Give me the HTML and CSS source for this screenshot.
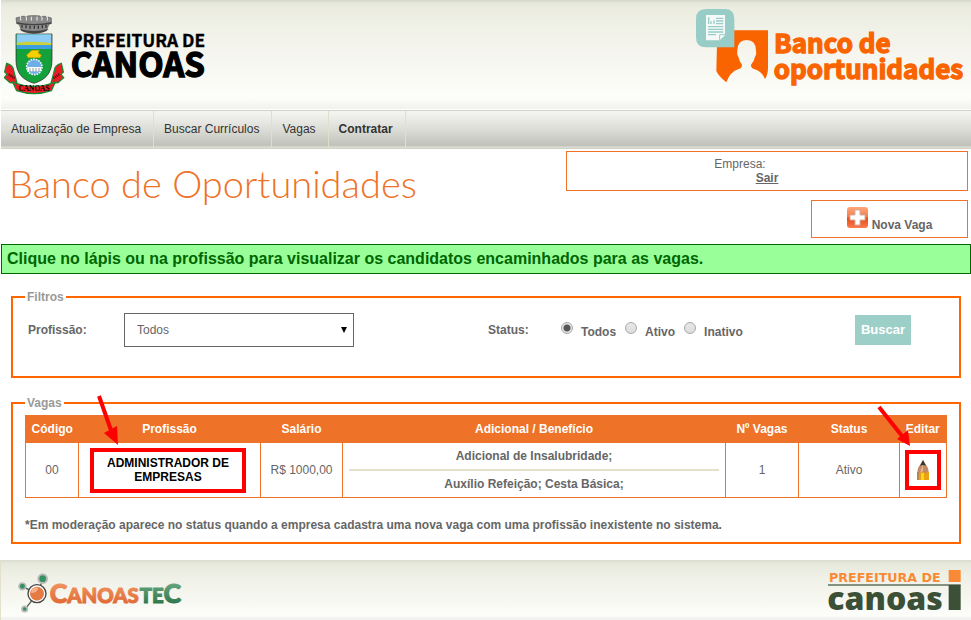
FILE: index.html
```html
<!DOCTYPE html>
<html lang="pt-BR">
<head>
<meta charset="utf-8">
<title>Banco de Oportunidades</title>
<link rel="stylesheet" href="styles.css">
</head>
<body>
<header class="header">
  <svg class="logo-city" viewBox="0 0 630 246" role="img" aria-label="Prefeitura de Canoas">
    <g transform="translate(-12 -45)">
      <path d="M48 54l10-3 5 3 2-5 9 0 5 4 3-5 12-1h14l12 1 3 5 5-4 9 0 2 5 5-3 10 3v16l-8 4-5 14q-39 16-78 0l-5-14-8-4z" fill="#8a8a8a" stroke="#555" stroke-width="2"/>
      <path d="M50 69q52 10 104 0" stroke="#444" stroke-width="4" fill="none"/>
      <path d="M62 51v11m17-11v11m15-12v12m17-12v12m15-11v11m16-11v11" stroke="#eee" stroke-width="3"/>
      <path d="M66 74v9m12-7v9m12-8v9m13-9v9m12-9v9m12-10v9m11-11v9" stroke="#333" stroke-width="4"/>
      <path d="M58 87q44 12 88 0-10 13-44 14-34-1-44-14z" fill="#444"/>
      <path d="M48 102h108v78c0 42-22 60-54 70-32-10-54-28-54-70z" fill="#14a03a" stroke="#222" stroke-width="2"/>
      <path d="M50 103h104v30H50z" fill="#8dcdf5"/>
      <path d="M50 128l32-3 38 1 34 3v6H50z" fill="#c9d23a"/>
      <path d="M50 135h104v12H50z" fill="#3e9fe0"/>
      <path d="M80 165l16-14h22l-4 8 10 6-4 8H84z" fill="#f5d000" stroke="#c49b00" stroke-width="2"/>
      <circle cx="103" cy="201" r="23" fill="#6daee8" stroke="#e8f4ff" stroke-width="5" stroke-dasharray="5 3"/>
      <path d="M83 201h40v13H83z" fill="#fff"/>
      <path d="M90 204v12m9-12v12m9-12v12m9-12v12" stroke="#8c9aa5" stroke-width="3"/>
      <path d="M20 190q20 6 21 22l10 38-21-2-17-15 8-10-7-7z" fill="#ed1c24" stroke="#168b36" stroke-width="4"/>
      <path d="M184 190q-20 6-21 22l-10 38 21-2 17-15-8-10 7-7z" fill="#ed1c24" stroke="#168b36" stroke-width="4"/>
      <path d="M26 223l18 12m134-12l-18 12" stroke="#611" stroke-width="7" stroke-dasharray="4 2"/>
      <path d="M38 246q64 26 128 0l-12 26q-52 18-104 0z" fill="#ed1c24" stroke="#168b36" stroke-width="4"/>
      <text x="102" y="273" class="crest-text">CANOAS</text>
    </g>
    <text x="201" y="97" class="city-small">PREFEITURA DE</text>
    <text x="200" y="186" class="city-big">CANOAS</text>
  </svg>
  <svg class="logo-bank" viewBox="0 0 804 240" role="img" aria-label="Banco de oportunidades">
    <g transform="translate(-48 -24)">
      <path d="M112 91h152v112q0 20-9 34-8-22-33-30-10-3-9-13 9-9 12-24 5-5 3-18 0-32-28-32-28 0-28 32-2 13 3 18 3 15 11 24 0 10-10 13-26 8-37 40-23-18-30-34z" fill="#fa6400"/>
      <path d="M78 27h56q29 0 29 29v86H78q-30 0-30-30V57q0-30 30-30z" fill="#98cdc7"/>
      <path d="M78 45h57v61l-16 15H78z" fill="#f5faf8"/>
      <path d="M86 52v20m7-8v8m9-11v11m6-17h22m-22 8h22m-22 8h22M84 80h46M84 88h46M84 96h46M84 104h24" stroke="#98cdc7" stroke-width="4"/>
      <path d="M119 121v-17h17" fill="none" stroke="#98cdc7" stroke-width="3"/>
    </g>
    <text x="234" y="136" class="bank-text">Banco de</text>
    <text x="233" y="212" class="bank-text">oportunidades</text>
  </svg>
</header>

<nav class="nav">
  <a href="#">Atualização de Empresa</a>
  <a href="#">Buscar Currículos</a>
  <a href="#">Vagas</a>
  <a href="#" class="current">Contratar</a>
</nav>

<main>
  <div class="top">
    <h1>Banco de Oportunidades</h1>
    <div class="side">
      <div class="company">
        <span>Empresa:</span>
        <a href="#">Sair</a>
      </div>
      <a href="#" class="new-job">
        <svg viewBox="0 0 21 21" width="21" height="21" aria-hidden="true">
          <defs><linearGradient id="plus" x1="0" y1="0" x2="0" y2="1"><stop offset="0" stop-color="#ffa87c"/><stop offset=".48" stop-color="#f57a45"/><stop offset=".52" stop-color="#e8490f"/><stop offset="1" stop-color="#fb7b50"/></linearGradient></defs>
          <rect width="21" height="21" rx="3" fill="url(#plus)"/>
          <path d="M8 3h5v5h5v5h-5v5H8v-5H3V8h5z" fill="#fff" stroke="#c9b3a8"/>
        </svg>
        <span>Nova Vaga</span>
      </a>
    </div>
  </div>

  <p class="notice">Clique no lápis ou na profissão para visualizar os candidatos encaminhados para as vagas.</p>

  <form>
    <fieldset>
      <legend>Filtros</legend>
      <div class="filters">
        <label class="name" for="job">Profissão:</label>
        <span class="select"><select id="job"><option>Todos</option></select></span>
        <span class="name status" id="status">Status:</span>
        <div class="radios" role="radiogroup" aria-labelledby="status">
          <label><input type="radio" name="status" checked><span>Todos</span></label>
          <label><input type="radio" name="status"><span>Ativo</span></label>
          <label><input type="radio" name="status"><span>Inativo</span></label>
        </div>
        <button type="submit">Buscar</button>
      </div>
    </fieldset>
  </form>

  <fieldset class="jobs">
    <legend>Vagas</legend>
    <table>
      <colgroup><col class="c-code"><col class="c-job"><col class="c-pay"><col><col class="c-count"><col class="c-status"><col class="c-edit"></colgroup>
      <thead>
        <tr><th>Código</th><th>Profissão</th><th>Salário</th><th>Adicional / Benefício</th><th>Nº Vagas</th><th>Status</th><th>Editar</th></tr>
      </thead>
      <tbody>
        <tr>
          <td>00</td>
          <td class="marked">
            <a href="#" class="job-link">ADMINISTRADOR DE EMPRESAS</a>
            <svg class="arrow arrow-job" viewBox="0 0 24 52" aria-hidden="true"><path d="M3 2L16 39" stroke="#f00" stroke-width="4"/><path d="M22 51L8 39l13-7z" fill="#f00"/></svg>
          </td>
          <td>R$ 1000,00</td>
          <td class="benefits"><div>Adicional de Insalubridade;</div><div>Auxílio Refeição; Cesta Básica;</div></td>
          <td>1</td>
          <td>Ativo</td>
          <td class="marked">
            <a href="#" class="edit-link" aria-label="Editar">
              <svg viewBox="0 0 12 20" width="12" height="20" aria-hidden="true">
                <path d="M6 0L1 8 0 14v6h12v-6l-1-6z" fill="#c38a66"/>
                <path d="M6 4L3 13l3-2z" fill="#e2b99b"/>
                <path d="M6 0L3 6q3-2 6 0z" fill="#333"/>
                <path d="M0 12q2-1 3 2 3-5 6 0 1-3 3-2v8H0z" fill="#e9a210"/>
                <path d="M4 13h3v7H4z" fill="#ffd21f"/>
                <path d="M0 12h2v8H0z" fill="#b98548"/>
              </svg>
            </a>
            <svg class="arrow arrow-edit" viewBox="0 0 34 42" aria-hidden="true"><path d="M2 2L25 31" stroke="#f00" stroke-width="4"/><path d="M33 41L20 34l11-9z" fill="#f00"/></svg>
          </td>
        </tr>
      </tbody>
    </table>
    <p class="note">*Em moderação aparece no status quando a empresa cadastra uma nova vaga com uma profissão inexistente no sistema.</p>
  </fieldset>
</main>

<footer class="footer">
  <svg class="logo-tec" viewBox="0 0 492 120" role="img" aria-label="CanoasTec">
    <defs>
      <linearGradient id="orange" x1="0" y1="0" x2="0" y2="1"><stop offset="0" stop-color="#f6a06c"/><stop offset="1" stop-color="#dc5f2b"/></linearGradient>
      <linearGradient id="green" x1="0" y1="0" x2="0" y2="1"><stop offset="0" stop-color="#79b28b"/><stop offset="1" stop-color="#206b40"/></linearGradient>
    </defs>
    <path d="M58 62L74 20M58 62L12 40M58 62L20 110" stroke="#555" stroke-width="4"/>
    <circle cx="74" cy="17" r="13" fill="#379263" stroke="#bbb" stroke-width="6"/>
    <circle cx="13" cy="40" r="10" fill="#379263" stroke="#bbb" stroke-width="5"/>
    <circle cx="20" cy="108" r="8" fill="#379263" stroke="#bbb" stroke-width="5"/>
    <circle cx="57" cy="62" r="27" fill="#fff" stroke="#444" stroke-width="4"/>
    <circle cx="57" cy="62" r="21" fill="#e67a43"/>
    <path d="M39 60q0-18 22-16-3 16-22 16z" fill="#f6b18c"/>
    <text x="95" y="90" class="tec-text" fill="url(#orange)" stroke="url(#orange)"><tspan class="tec-big">C</tspan>ANOAS</text>
    <text x="365" y="90" class="tec-text" fill="url(#green)" stroke="url(#green)">TE<tspan class="tec-big">C</tspan></text>
  </svg>
  <svg class="logo-foot" viewBox="0 0 402 126" role="img" aria-label="Prefeitura de Canoas">
    <text x="3" y="35" class="foot-small">PREFEITURA DE</text>
    <path d="M0 42h398v6H0z" fill="#829180"/>
    <text x="-2" y="119" class="foot-big">canoas</text>
    <path d="M362 0h36v36h-36z" fill="#f98a35"/>
    <path d="M362 45h36v75h-36z" fill="#3b5037"/>
  </svg>
</footer>
</body>
</html>
```
FILE: styles.css
```css
* { box-sizing: border-box; }
body {
  margin: 0;
  padding-left: 1px;
  background: #fff;
  color: #666;
  font: 12px/14px "Liberation Sans", Arial, sans-serif;
}
a { color: inherit; }
text { font-family: "Noto Sans CJK SC", "Liberation Sans", sans-serif; font-weight: bold; }

.header {
  display: flex;
  justify-content: space-between;
  align-items: flex-start;
  height: 110px;
  padding: 8px 7px 0 3px;
  border-bottom: 1px solid #fff;
  background: linear-gradient(#d5d7ca 0, #e5e7da 3px, #ecede0 8px, #f5f5ee 50px, #fdfdfa 98px, #f1f2ed 109px);
}
.logo-city { width: 210px; height: 82px; margin-top: 7px; }
.logo-bank { width: 268px; height: 80px; }
.crest-text { font-family: "Liberation Serif", serif; font-size: 22px; text-anchor: middle; }
.city-small { font-size: 52px; stroke: #000; stroke-width: 1px; }
.city-big { font-size: 99px; stroke: #000; stroke-width: 4px; }
.bank-text { font-size: 78px; fill: #fa6400; stroke: #fa6400; stroke-width: 4px; }

.nav {
  display: flex;
  height: 39px;
  border-top: 1px solid #d0d1c9;
  border-bottom: 1px solid #d0d1c7;
  background: linear-gradient(#f5f5f2 0, #dcddd7 50%, #c1c2ba 34px, #c5c6be 35px, #dcddd2 36px);
}
.nav a {
  padding: 11px 12px 11px 10px;
  border-right: 1px solid #e0e0c8;
  color: #333;
  text-decoration: none;
}
.nav .current { font-weight: bold; }

.top { display: flex; justify-content: space-between; height: 95px; padding: 2px 3px 0 8px; }
h1 {
  margin: 9px 0 0;
  color: #ee7228;
  font: 300 38px/46px Lato, sans-serif;
}
.side { display: flex; flex-direction: column; align-items: flex-end; gap: 9px; width: 402px; }
.company {
  display: flex;
  flex-direction: column;
  align-items: center;
  width: 100%;
  height: 40px;
  padding: 5px 0;
  border: 1px solid #ee7228;
}
.company span { margin-right: 54px; }
.company a { font-weight: bold; }
.new-job {
  display: flex;
  justify-content: center;
  gap: 4px;
  width: 157px;
  height: 38px;
  padding-top: 6px;
  border: 1px solid #ee7228;
  font-weight: bold;
  text-decoration: none;
}
.new-job span { padding-top: 11px; }

.notice {
  margin: 0;
  padding: 4px 5px;
  border: 1px solid #060;
  background: #9f9;
  color: #060;
  font: bold 16px/20px "Liberation Sans", Arial, sans-serif;
}

fieldset {
  min-width: 0;
  margin: 16px 10px 0;
  padding: 9px 12px 29px;
  border: 2px solid #f60;
}
legend { padding: 0 2px; color: #999; font-weight: bold; }
.filters { display: flex; align-items: center; height: 34px; padding-left: 3px; }
.name { width: 96px; font-weight: bold; }
.select { position: relative; width: 230px; }
.select::after {
  content: "";
  position: absolute;
  top: 14px;
  right: 7px;
  border: 3px solid transparent;
  border-top: 6px solid #000;
  border-bottom: 0;
  pointer-events: none;
}
select {
  appearance: none;
  width: 100%;
  height: 34px;
  padding: 0 12px;
  border: 1px solid #666;
  border-radius: 0;
  background: #fff;
  color: #666;
  font: inherit;
}
.status { width: 73px; margin-left: 134px; }
.radios { display: flex; gap: 9px; font-weight: bold; }
.radios label { display: flex; gap: 8px; }
.radios span { padding-top: 3px; }
input {
  appearance: none;
  width: 12px;
  height: 12px;
  margin: 0;
  border: 1px solid #a8a8a8;
  border-radius: 50%;
  background: linear-gradient(#e8e8e8, #dcdcdc);
}
input:checked { background: radial-gradient(circle, #555 0 3px, #e4e4e4 4px); }
button {
  height: 30px;
  margin-left: auto;
  margin-right: 36px;
  padding: 0 6px;
  border: 0;
  background: #9dcfc9;
  color: #fff;
  font: bold 13px/28px "Liberation Sans", Arial, sans-serif;
}

.jobs { margin-top: 18px; padding: 5px 12px 10px; }
table { width: 100%; table-layout: fixed; border-collapse: collapse; }
.c-code { width: 53px; }
.c-job { width: 182px; }
.c-pay { width: 82px; }
.c-count { width: 73px; }
.c-status { width: 101px; }
.c-edit { width: 47px; }
th { height: 27px; padding: 0; background: #ee7228; color: #fff; white-space: nowrap; }
thead tr { border: 1px solid #ee7228; }
td { height: 55px; padding: 0; border: 1px solid #ee7228; text-align: center; }
.marked { position: relative; }
.job-link {
  display: block;
  margin: 0 14px 0 11px;
  padding: 4px 12px 5px;
  border: 4px solid #f00;
  color: #000;
  font-weight: bold;
  text-decoration: none;
}
.edit-link {
  display: flex;
  justify-content: center;
  align-items: center;
  width: 36px;
  height: 40px;
  margin: 0 auto;
  border: 4px solid #f00;
}
.arrow { position: absolute; pointer-events: none; }
.arrow-job { left: 17px; top: -49px; width: 24px; height: 52px; }
.arrow-edit { left: -23px; top: -38px; width: 34px; height: 42px; }
.benefits { padding: 0 6px; font-weight: bold; }
.benefits div { padding: 6px 0; }
.benefits div + div { border-top: 2px solid #e3e1cb; }
.note { margin: 20px 0 0; font-weight: bold; }

.footer {
  display: flex;
  justify-content: space-between;
  align-items: flex-start;
  height: 60px;
  margin-top: 16px;
  padding: 10px 9px 0 17px;
  background: linear-gradient(#d8dacd 0, #e7e8dc 3px, #edeee3 12px, #fdfdfa 56px, #ededeb 59px, #fbfbf9 60px);
  box-shadow: -1px 0 #e3e1cb;
}
.logo-tec { width: 164px; height: 40px; margin-top: 3px; }
.logo-foot { width: 134px; height: 42px; }
.tec-text { font-family: Lato, sans-serif; font-weight: 900; font-size: 61px; stroke-width: 3px; }
.tec-big { font-size: 80px; }
.foot-small { font-family: "DejaVu Sans", sans-serif; font-size: 38px; fill: #f98a35; }
.foot-big { font-family: "Noto Sans", sans-serif; font-weight: 900; font-size: 96px; fill: #3b5037; }
```
